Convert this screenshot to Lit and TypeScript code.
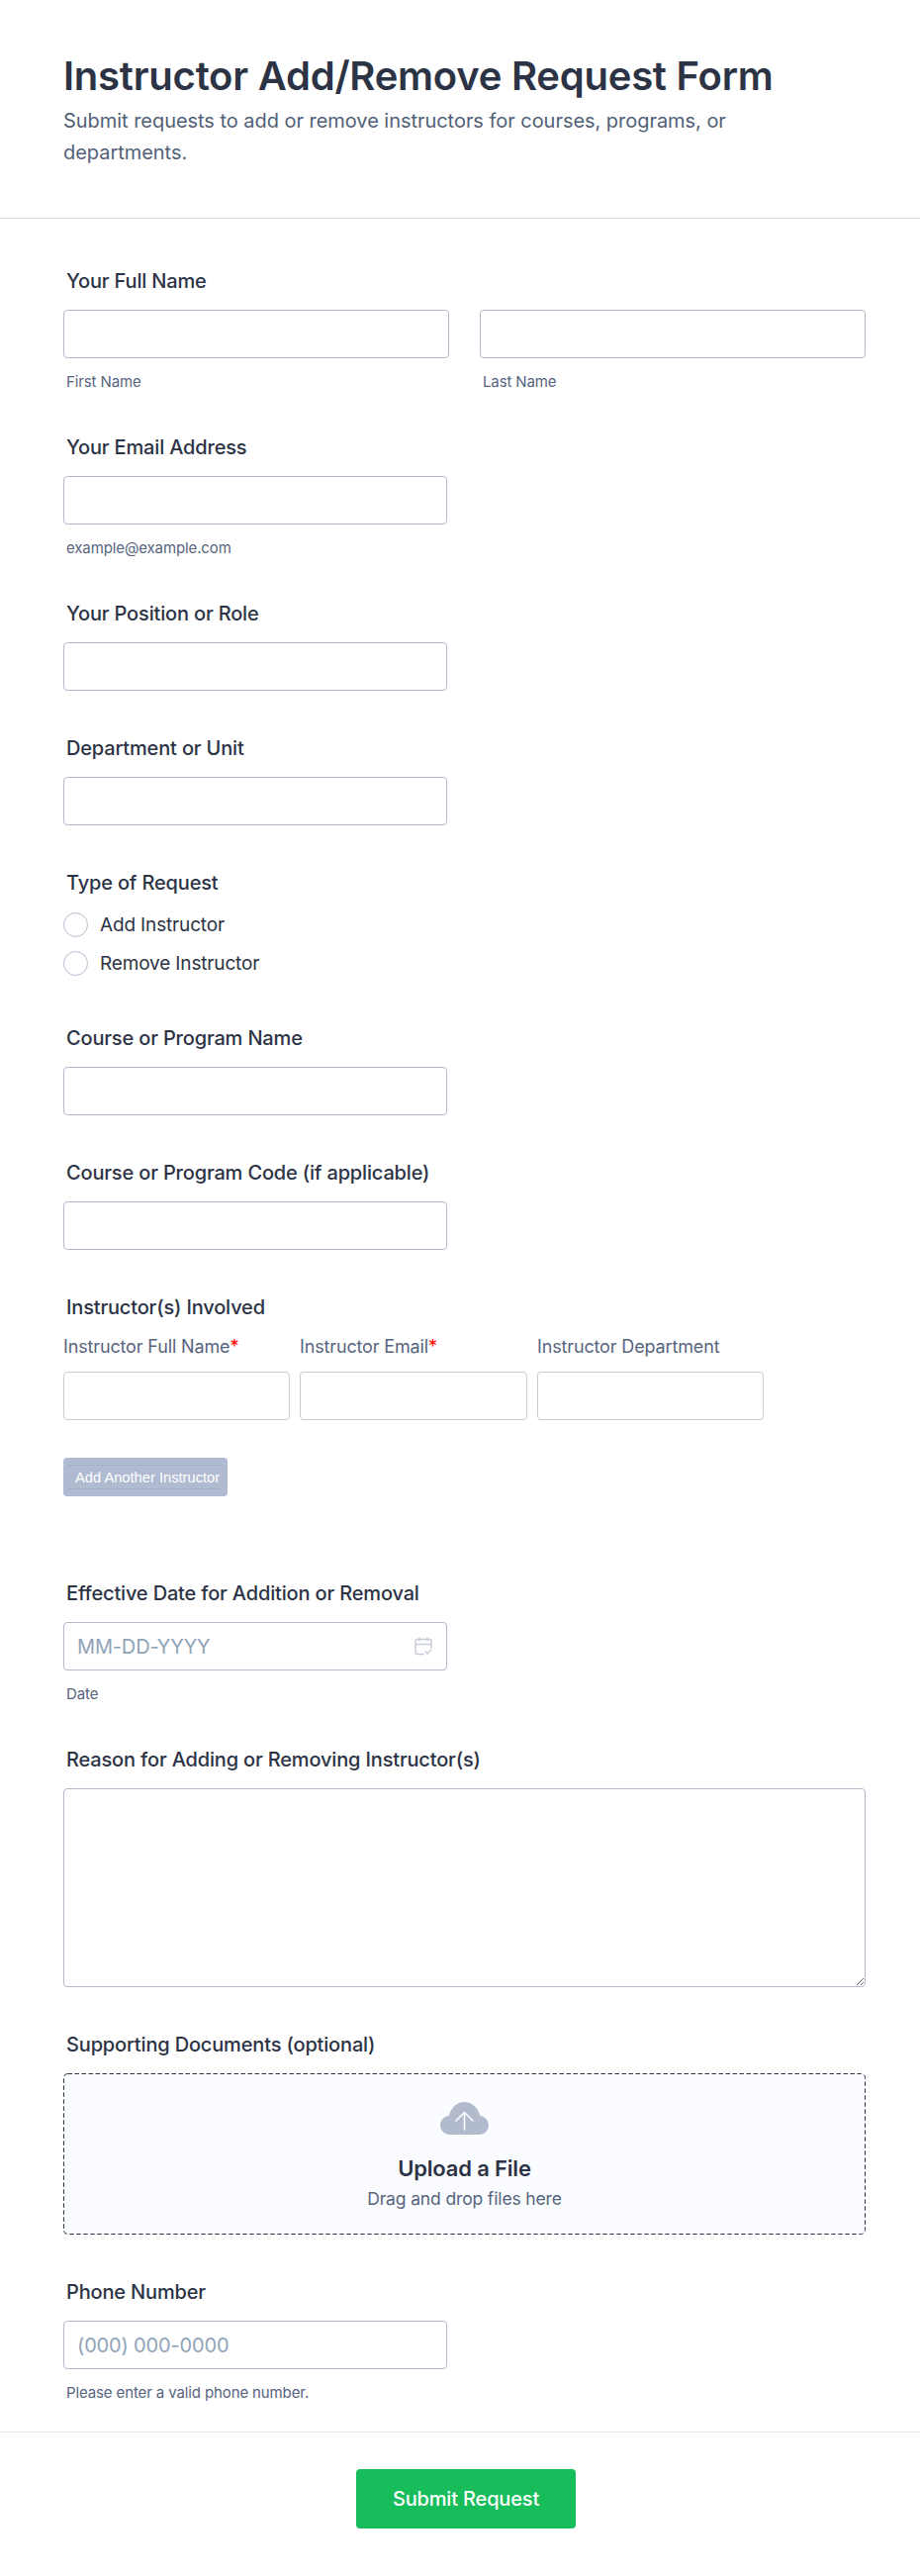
import { LitElement, html, css } from "lit";
import { customElement } from "lit/decorators.js";

@customElement("app-root")
export class AppRoot extends LitElement {
  static styles = css`
    :host { display: block; background: #fff; font-family: Inter, "Liberation Sans", sans-serif; color: #2c3345; }
    * { box-sizing: border-box; letter-spacing: -0.008em; }
    .head { height: 221px; padding: 52px 64px 0; border-bottom: 1px solid #d9dde8; }
    h1 { margin: 0 0 4px; font-size: 40px; line-height: 50px; font-weight: 600; color: #2c3345; letter-spacing: -0.006em; }
    .sub { margin: 0; font-size: 20px; line-height: 32px; color: #525f78; max-width: 740px; letter-spacing: -0.002em; }
    form { display: block; padding: 51px 55px 0 64px; }
    .field { margin-bottom: 46px; }
    .lbl { display: block; font-size: 20px; line-height: 24px; font-weight: 500; color: #2c3345; padding-left: 3px; margin-bottom: 17px; }
    input.t, textarea { display: block; border: 1px solid #b4b9ca; border-radius: 4px; background: #fff; height: 49px; width: 388px; font: 20px Inter, sans-serif; padding: 0 13px; color: #2c3345; outline: none; }
    input.t::placeholder { color: #8fa3b8; opacity: 1; }
    textarea { width: 811px; height: 201px; }
    .hint { font-size: 15px; line-height: 18px; color: #57647e; padding-left: 3px; margin-top: 15px; height: 17px; }
    .two { display: grid; grid-template-columns: 390px 390px; column-gap: 31px; }
    .two input.t { width: 100%; }
    .radios { display: flex; flex-direction: column; gap: 14px; padding: 18px 0 5px; }
    .lbl.r { margin-bottom: 0; }
    .radio { display: flex; align-items: center; gap: 12px; font-size: 19px; line-height: 25px; font-weight: 400; color: #2c3345; }
    .dot { width: 25px; height: 25px; border-radius: 50%; border: 1px solid #b8bdcf; background: #fff; }
    .cols { display: grid; grid-template-columns: 229px 230px 229px; column-gap: 10px; }
    .lbl.c { margin-bottom: 16px; }
    .collbl { font-size: 18px; line-height: 24px; color: #57647e; margin-bottom: 13px; }
    .req { color: #f00; }
    .cols input.t { width: 100%; height: 49px; border-color: #c9cbd6; }
    .add { position: relative; display: block; margin: 38px 0 86px; width: 166px; height: 39px; background: #b0bad0; color: #fff; border: 0; border-radius: 4px; font: 14.7px "Liberation Sans", sans-serif; padding: 0 0 0 12px; text-align: left; white-space: nowrap; letter-spacing: 0; }
    .add::before { content: ""; position: absolute; left: 6px; right: 6px; top: 7px; bottom: 7px; border-top: 1px dotted rgba(120,130,155,.35); border-bottom: 1px dotted rgba(120,130,155,.35); }
    .wrap { position: relative; width: 388px; }
    .cal { position: absolute; right: 15px; top: 15px; width: 18px; height: 19px; }
    .drop { position: relative; height: 163px; border-radius: 4px; background: #fbfcff; display: flex; flex-direction: column; align-items: center; padding-top: 29px; }
    .dash { position: absolute; left: 0; top: 0; width: 811px; height: 163px; }
    .cloud { width: 49px; height: 33px; display: block; }
    .up { font-size: 22px; line-height: 28px; font-weight: 600; color: #2c3345; margin-top: 20px; }
    .drag { font-size: 17.5px; line-height: 24px; color: #57647e; margin-top: 5px; }
    .phone { margin-bottom: 31px; }
    .foot { border-top: 1px solid #e3e5ee; height: 147px; display: flex; justify-content: center; padding: 37px 0 0 12px; }
    .submit { width: 222px; height: 60px; background: #18bd5b; color: #fff; border: 0; border-radius: 4px; font: 500 20px Inter, sans-serif; }
  `;

  render() {
    return html`
      <header class="head">
        <h1>Instructor Add/Remove Request Form</h1>
        <p class="sub">Submit requests to add or remove instructors for courses, programs, or departments.</p>
      </header>
      <form>
        <div class="field">
          <span class="lbl">Your Full Name</span>
          <div class="two">
            <div><input class="t" /><div class="hint">First Name</div></div>
            <div><input class="t" /><div class="hint">Last Name</div></div>
          </div>
        </div>
        <div class="field">
          <span class="lbl">Your Email Address</span>
          <input class="t" /><div class="hint">example@example.com</div>
        </div>
        <div class="field"><span class="lbl">Your Position or Role</span><input class="t" /></div>
        <div class="field"><span class="lbl">Department or Unit</span><input class="t" /></div>
        <div class="field">
          <span class="lbl r">Type of Request</span>
          <div class="radios">
            <div class="radio"><span class="dot"></span>Add Instructor</div>
            <div class="radio"><span class="dot"></span>Remove Instructor</div>
          </div>
        </div>
        <div class="field"><span class="lbl">Course or Program Name</span><input class="t" /></div>
        <div class="field"><span class="lbl">Course or Program Code (if applicable)</span><input class="t" /></div>
        <div class="field">
          <span class="lbl c">Instructor(s) Involved</span>
          <div class="cols">
            <div><div class="collbl">Instructor Full Name<span class="req">*</span></div><input class="t" /></div>
            <div><div class="collbl">Instructor Email<span class="req">*</span></div><input class="t" /></div>
            <div><div class="collbl">Instructor Department</div><input class="t" /></div>
          </div>
          <button type="button" class="add">Add Another Instructor</button>
        </div>
        <div class="field">
          <span class="lbl">Effective Date for Addition or Removal</span>
          <div class="wrap">
            <input class="t" placeholder="MM-DD-YYYY" />
            <svg class="cal" viewBox="0 0 18 19" fill="none" stroke="#c5cad6" stroke-width="1.4" stroke-linecap="round" stroke-linejoin="round">
              <path d="M9 17.5H3a2 2 0 0 1-2-2V4.5a2 2 0 0 1 2-2h12a2 2 0 0 1 2 2V11" />
              <path d="M1 7.5h16M5 1v3M13 1v3" />
              <path d="M11 15l2 2 4-4" />
            </svg>
          </div>
          <div class="hint">Date</div>
        </div>
        <div class="field"><span class="lbl">Reason for Adding or Removing Instructor(s)</span><textarea></textarea></div>
        <div class="field">
          <span class="lbl">Supporting Documents (optional)</span>
          <div class="drop">
            <svg class="dash" viewBox="0 0 811 163">
              <rect x="0.5" y="0.5" width="810" height="162" rx="4" fill="none" stroke="#2c3345" stroke-dasharray="4.5 2.5" />
            </svg>
            <svg class="cloud" viewBox="0 0 49 33">
              <path fill="#b2bbce" d="M10 33C4.5 33 0 28.8 0 23.5 0 18.5 3.8 14.5 8.8 14 10.5 6 17 0 24.5 0S38.5 6 40.2 14C45.2 14.5 49 18.5 49 23.5 49 28.8 44.5 33 39 33Z" />
              <path fill="none" stroke="#fbfcff" stroke-width="1.6" stroke-linecap="round" stroke-linejoin="round" d="M24.5 28V11M16 19l8.5-8.5L33 19" />
            </svg>
            <div class="up">Upload a File</div>
            <div class="drag">Drag and drop files here</div>
          </div>
        </div>
        <div class="field phone">
          <span class="lbl">Phone Number</span>
          <input class="t" placeholder="(000) 000-0000" />
          <div class="hint">Please enter a valid phone number.</div>
        </div>
      </form>
      <div class="foot"><button type="button" class="submit">Submit Request</button></div>
    `;
  }
}
